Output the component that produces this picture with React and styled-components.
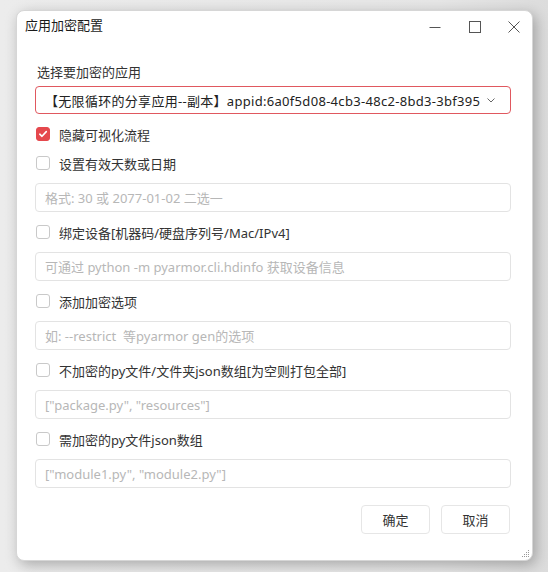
import React, { useState } from 'react';
import styled, { createGlobalStyle } from 'styled-components';

const GlobalStyle = createGlobalStyle`
  html, body {
    margin: 0;
    padding: 0;
    background: #e9e9e9;
    font-family: "Noto Sans", "Noto Sans CJK SC", sans-serif;
  }
`;

const Desk = styled.div`
  width: 548px;
  height: 572px;
  padding: 10px 0 0 16px;
  box-sizing: border-box;
  background: linear-gradient(90deg, #ececec 0%, #e6e6e6 80%, #dcdcdc 100%);
`;

const Window = styled.div`
  width: 517px;
  height: 551px;
  box-sizing: border-box;
  background: #fff;
  border: 1px solid #d6d6d6;
  border-radius: 8px;
  box-shadow: 3px 4px 14px rgba(0, 0, 0, 0.28);
  display: flex;
  flex-direction: column;
  position: relative;
`;

const TitleBar = styled.div`
  height: 31px;
  display: flex;
  align-items: center;
  padding: 0 0 0 8px;
`;

const Title = styled.span`
  flex: 1;
  font-size: 13px;
  line-height: 18px;
  color: #1a1a1a;
  margin-top: -3px;
`;

const WinBtn = styled.div`
  width: ${p => p.$w || 40}px;
  height: 31px;
  display: flex;
  align-items: center;
  justify-content: center;
  color: #555;
`;

const Body = styled.div`
  flex: 1;
  display: flex;
  flex-direction: column;
  padding: 20px 21px 0 18px;
`;

const Label = styled.div`
  height: 20px;
  line-height: 20px;
  font-size: 13px;
  color: #333;
  padding-left: 2px;
  margin-bottom: 4px;
`;

const Select = styled.div`
  height: 28px;
  box-sizing: border-box;
  border: 1px solid #e0585f;
  border-radius: 4px;
  display: flex;
  align-items: center;
  padding: 0 14px 0 9px;
  font-size: 13px;
  color: #222;
`;

const SelectText = styled.span`
  flex: 1;
  white-space: nowrap;
  overflow: hidden;
  letter-spacing: 0.3px;
`;

const Fields = styled.div`
  display: flex;
  flex-direction: column;
  gap: 10px;
  margin-top: 10px;
`;

const CheckRow = styled.label`
  height: 20px;
  display: flex;
  align-items: center;
  gap: 9px;
  padding-left: 1px;
  font-size: 13px;
  color: #333;
  margin-top: ${p => (p.$tight ? '-1px' : '0')};
`;

const Box = styled.span`
  width: 14px;
  height: 14px;
  box-sizing: border-box;
  border-radius: 3px;
  border: 1px solid ${p => (p.$on ? '#e5484d' : '#c9c9c9')};
  background: ${p => (p.$on ? '#e5484d' : '#fff')};
  display: flex;
  align-items: center;
  justify-content: center;
`;

const Input = styled.input`
  height: 29px;
  box-sizing: border-box;
  border: 1px solid #e3e3e3;
  border-radius: 4px;
  padding: 0 9px;
  font-family: inherit;
  font-size: 13px;
  color: #333;
  outline: none;
  &::placeholder {
    color: #b7b7b7;
  }
`;

const Footer = styled.div`
  display: flex;
  justify-content: flex-end;
  gap: 11px;
  margin-top: 17px;
  padding-right: 1px;
`;

const Button = styled.button`
  width: 69px;
  height: 29px;
  border: 1px solid #e6e6e6;
  border-radius: 4px;
  background: #fff;
  font-family: inherit;
  font-size: 13px;
  color: #333;
`;

const Grip = styled.svg`
  position: absolute;
  right: 2px;
  bottom: 2px;
`;

const Check = ({ on, label, tight }) => (
  <CheckRow $tight={tight}>
    <Box $on={on}>
      {on && (
        <svg width="10" height="10" viewBox="0 0 10 10">
          <path d="M1.8 5.2 L4 7.3 L8.3 2.6" fill="none" stroke="#fff" strokeWidth="1.6" strokeLinecap="round" strokeLinejoin="round" />
        </svg>
      )}
    </Box>
    {label}
  </CheckRow>
);

const rows = [
  { label: '设置有效天数或日期', ph: '格式: 30 或 2077-01-02 二选一' },
  { label: '绑定设备[机器码/硬盘序列号/Mac/IPv4]', ph: '可通过 python -m pyarmor.cli.hdinfo 获取设备信息' },
  { label: '添加加密选项', ph: '如: --restrict  等pyarmor gen的选项' },
  { label: '不加密的py文件/文件夹json数组[为空则打包全部]', ph: '["package.py", "resources"]' },
  { label: '需加密的py文件json数组', ph: '["module1.py", "module2.py"]' },
];

export default function App() {
  const [hide] = useState(true);
  return (
    <>
      <GlobalStyle />
      <Desk>
        <Window>
          <TitleBar>
            <Title>应用加密配置</Title>
            <WinBtn>
              <svg width="12" height="12" viewBox="0 0 12 12">
                <path d="M0.5 6.5 H11.5" stroke="currentColor" strokeWidth="1" />
              </svg>
            </WinBtn>
            <WinBtn>
              <svg width="12" height="12" viewBox="0 0 12 12">
                <rect x="0.5" y="0.5" width="11" height="11" fill="none" stroke="currentColor" strokeWidth="1" />
              </svg>
            </WinBtn>
            <WinBtn $w={37}>
              <svg width="12" height="12" viewBox="0 0 12 12">
                <path d="M0.5 0.5 L11.5 11.5 M11.5 0.5 L0.5 11.5" stroke="currentColor" strokeWidth="1" />
              </svg>
            </WinBtn>
          </TitleBar>
          <Body>
            <Label>选择要加密的应用</Label>
            <Select>
              <SelectText>【无限循环的分享应用--副本】appid:6a0f5d08-4cb3-48c2-8bd3-3bf395</SelectText>
              <svg width="10" height="10" viewBox="0 0 10 10">
                <path d="M1.5 3.5 L5 7 L8.5 3.5" fill="none" stroke="#666" strokeWidth="1" />
              </svg>
            </Select>
            <Fields>
              <Check on={hide} label="隐藏可视化流程" />
              {rows.map((r, i) => (
                <React.Fragment key={r.label}>
                  <Check label={r.label} tight={i === 0} />
                  <Input placeholder={r.ph} />
                </React.Fragment>
              ))}
            </Fields>
            <Footer>
              <Button>确定</Button>
              <Button>取消</Button>
            </Footer>
          </Body>
          <Grip width="10" height="10" viewBox="0 0 10 10">
            {[[8, 2], [6, 4], [8, 4], [4, 6], [6, 6], [8, 6], [2, 8], [4, 8], [6, 8], [8, 8]].map(([x, y]) => (
              <rect key={x + '-' + y} x={x} y={y} width="1" height="1" fill="#9a9a9a" />
            ))}
          </Grip>
        </Window>
      </Desk>
    </>
  );
}
